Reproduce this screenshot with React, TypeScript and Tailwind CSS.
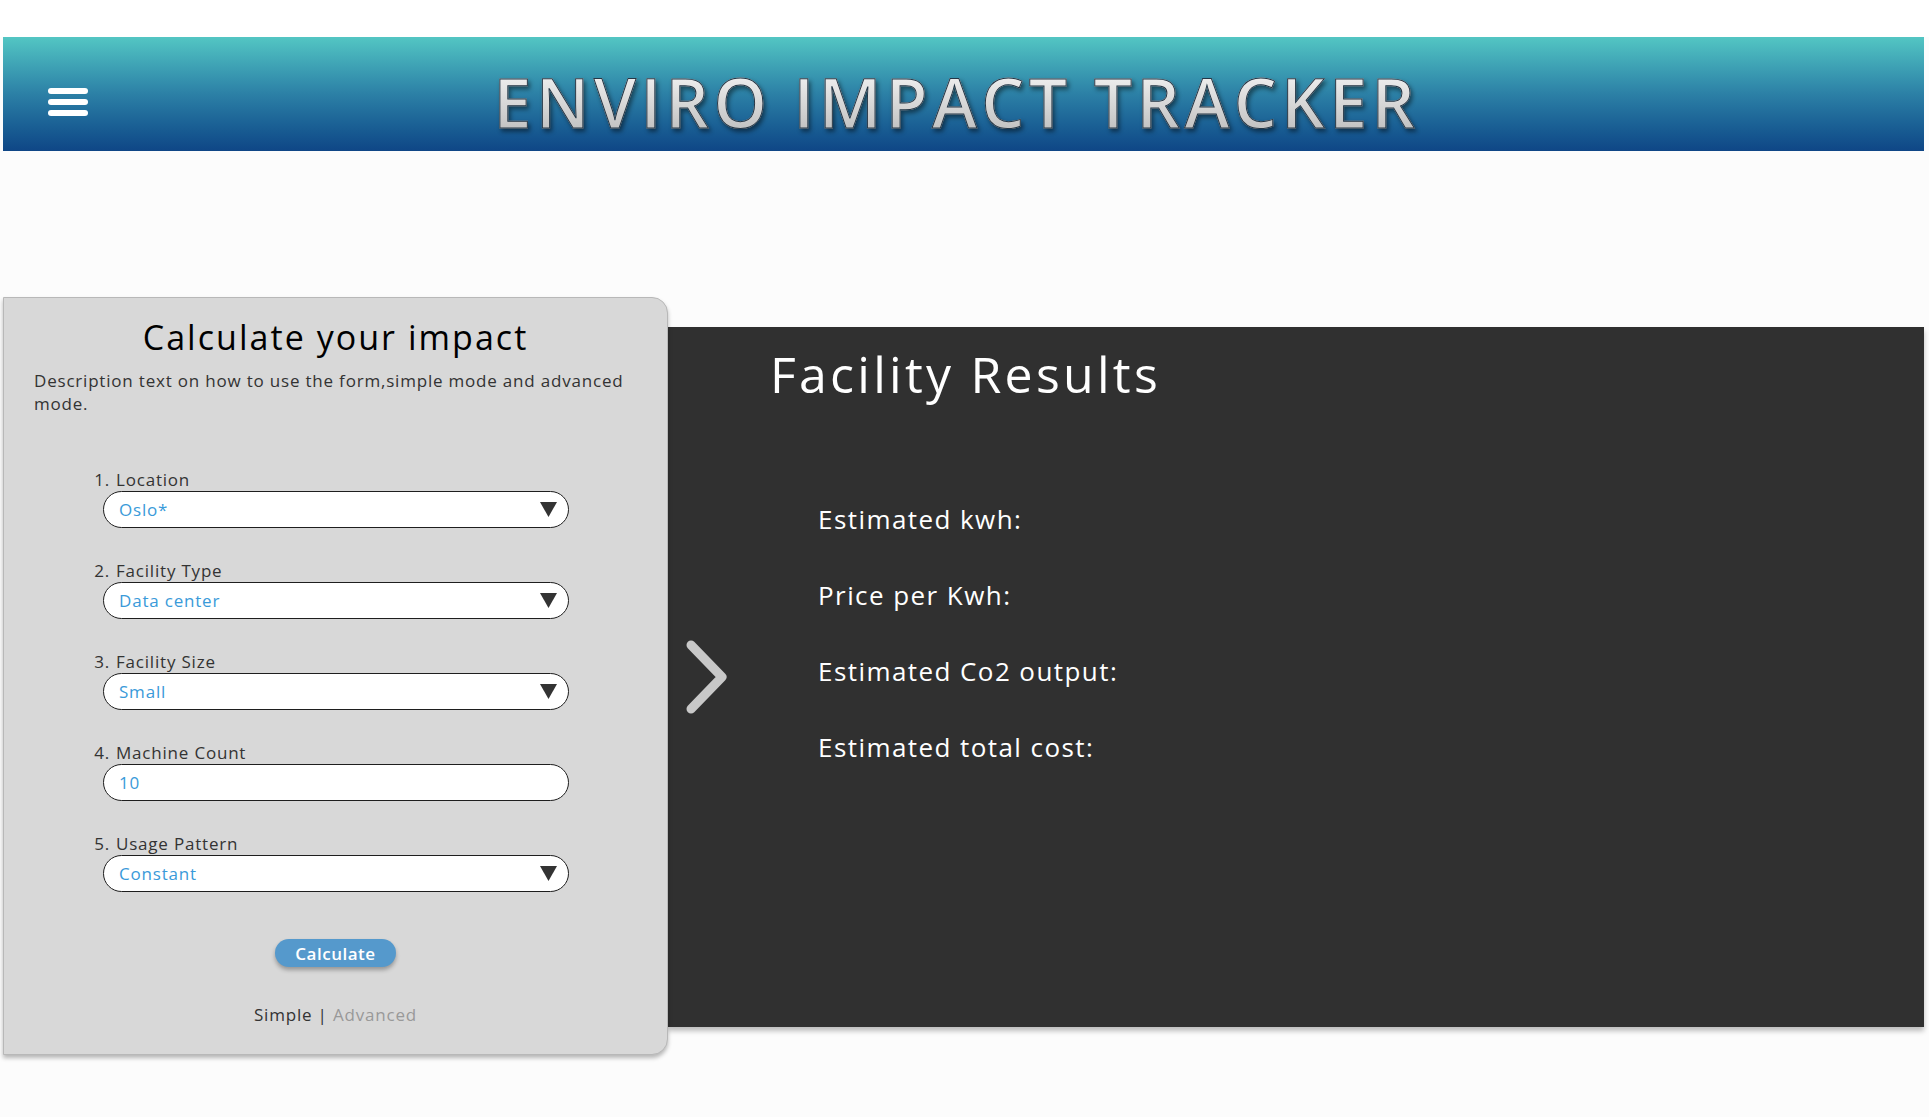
import React from "react";

function Caret() {
  return (
    <svg width="17" height="15" viewBox="0 0 17 15" className="shrink-0">
      <polygon points="0,0 17,0 8.5,15" fill="#333333" />
    </svg>
  );
}

function Field({ n, label, value, select = true }: { n: string; label: string; value: string; select?: boolean }) {
  return (
    <div className="flex flex-col">
      <div className="flex -ml-[13px] h-[20px] leading-[20px] text-[17px] text-[#333]">
        <span className="w-[20px] text-right">{n}.</span>
        <span className="ml-[6px]">{label}</span>
      </div>
      <div className="mt-[1px] h-[37px] w-[466px] rounded-full border-[1.5px] border-[#1e1e1e] bg-white flex items-center justify-between pl-[15px] pr-[11px]">
        <span className="text-[17px] text-[#3a9ad9] leading-none">{value}</span>
        {select && <Caret />}
      </div>
    </div>
  );
}

export default function App() {
  return (
    <div className="w-[1929px] min-h-[1117px] bg-[#fcfcfc] font-['Open_Sans',sans-serif] tracking-[0.05em]">
      <div className="h-[37px] bg-white" />
      <header className="ml-[3px] mr-[5px] h-[114px] grid grid-cols-[1fr_auto_1fr] items-center bg-linear-to-b from-[#53c6c3] via-[#2c80a6] to-[#0f4686]">
        <div className="pl-[45px] mt-[16px]">
          <div className="flex flex-col gap-[5px] w-[40px]">
            <span className="h-[6px] rounded-full bg-white" />
            <span className="h-[6px] rounded-full bg-white" />
            <span className="h-[6px] rounded-full bg-white" />
          </div>
        </div>
        <h1 className="mt-[15px] mr-[14px] text-[68px] leading-[80px] font-semibold tracking-[0.065em] bg-linear-to-b from-[#fafafa] to-[#b8b8b8] bg-clip-text text-transparent [-webkit-text-stroke:1px_#243646] drop-shadow-[2px_3px_2px_rgba(0,0,0,0.45)]">
          ENVIRO IMPACT TRACKER
        </h1>
        <div />
      </header>

      <main className="flex items-start ml-[3px] mr-[5px] mt-[146px]">
        <section className="relative z-10 w-[665px] h-[758px] shrink-0 bg-[#d8d8d8] rounded-r-[16px] border border-[#b8b8b8] shadow-[0_3px_4px_rgba(0,0,0,0.28)] flex flex-col pt-[19px]">
          <h2 className="text-center text-[34px] leading-[40px] text-black tracking-[0.06em]">Calculate your impact</h2>
          <p className="mt-[12px] pl-[30px] pr-[20px] text-[17px] leading-[23px] text-[#333]">
            Description text on how to use the form,simple mode and advanced mode.
          </p>
          <div className="mt-[55px] ml-[99px] flex flex-col gap-[33px]">
            <Field n="1" label="Location" value="Oslo*" />
            <Field n="2" label="Facility Type" value="Data center" />
            <Field n="3" label="Facility Size" value="Small" />
            <Field n="4" label="Machine Count" value="10" select={false} />
            <Field n="5" label="Usage Pattern" value="Constant" />
          </div>
          <div className="mt-[47px] flex justify-center">
            <button className="h-[28px] w-[121px] rounded-full bg-[#5599cc] text-white text-[17px] leading-none font-semibold tracking-[0.03em] shadow-[0_3px_4px_rgba(0,0,0,0.3)]">
              Calculate
            </button>
          </div>
          <div className="mt-[38px] text-center text-[17px] leading-[20px]">
            <span className="text-[#333]">Simple</span>
            <span className="text-[#333]"> | </span>
            <span className="text-[#999]">Advanced</span>
          </div>
        </section>

        <section className="flex-1 h-[700px] mt-[30px] bg-[#303030] shadow-[0_4px_5px_rgba(0,0,0,0.25)] flex">
          <svg width="44" height="76" viewBox="0 0 44 76" className="ml-[17px] self-center shrink-0">
            <polyline points="6,6 37,38 6,70" fill="none" stroke="#c8c8c8" strokeWidth="9" strokeLinecap="round" strokeLinejoin="round" />
          </svg>
          <div className="ml-[41px] pt-[17px] flex flex-col">
            <h2 className="text-[50px] leading-[60px] text-white tracking-[0.065em]">Facility Results</h2>
            <div className="mt-[77px] ml-[48px] flex flex-col text-[26px] leading-[76px] text-white tracking-[0.055em]">
              <div>Estimated kwh:</div>
              <div>Price per Kwh:</div>
              <div>Estimated Co2 output:</div>
              <div>Estimated total cost:</div>
            </div>
          </div>
        </section>
      </main>
    </div>
  );
}
